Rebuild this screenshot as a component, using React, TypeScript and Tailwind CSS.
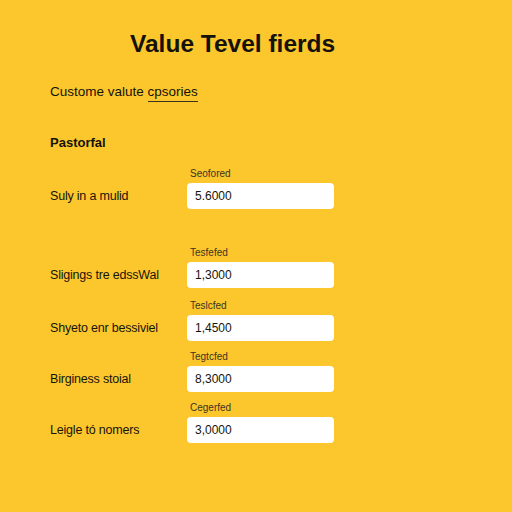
const rows = [
  { tag: "Seofored", label: "Suly in a mulid", value: "5.6000", gap: "mt-[17px]" },
  { tag: "Tesfefed", label: "Sligings tre edssWal", value: "1,3000", gap: "mt-[38px]" },
  { tag: "Teslcfed", label: "Shyeto enr bessiviel", value: "1,4500", gap: "mt-[12px]" },
  { tag: "Tegtcfed", label: "Birginess stoial", value: "8,3000", gap: "mt-[10px]" },
  { tag: "Cegerfed", label: "Leigle tó nomers", value: "3,0000", gap: "mt-[10px]" },
];

function FieldRow({ tag, label, value, gap }: { tag: string; label: string; value: string; gap: string }) {
  return (
    <div className={`flex items-end ${gap}`}>
      <div className="flex h-[26px] w-[137px] items-center text-[12.5px] tracking-[-0.2px] text-[#17140c]">{label}</div>
      <div className="flex flex-col">
        <span className="mb-[3px] pl-[3px] text-[10px] leading-[12px] text-[#3b3422]">{tag}</span>
        <div className="flex h-[26px] w-[147px] items-center rounded-[4px] bg-white pl-[8px] text-[12px] text-[#17140c]">
          {value}
        </div>
      </div>
    </div>
  );
}

export default function App() {
  return (
    <div className="h-[512px] w-[512px] overflow-hidden bg-[#fcc72c] pl-[50px] font-['Liberation_Sans',Arial,sans-serif] text-[#14120b]">
      <h1 className="pl-[80px] pt-[29px] text-[24.5px] font-bold leading-[29px]">Value Tevel fierds</h1>
      <p className="mt-[26px] text-[13.5px] leading-[16px]">
        Custome valute <span className="border-b border-[#3a3320] pb-[2px]">cpsories</span>
      </p>
      <h2 className="mt-[35px] text-[13px] font-bold leading-[16px]">Pastorfal</h2>
      {rows.map((r) => (
        <FieldRow key={r.tag} {...r} />
      ))}
    </div>
  );
}
